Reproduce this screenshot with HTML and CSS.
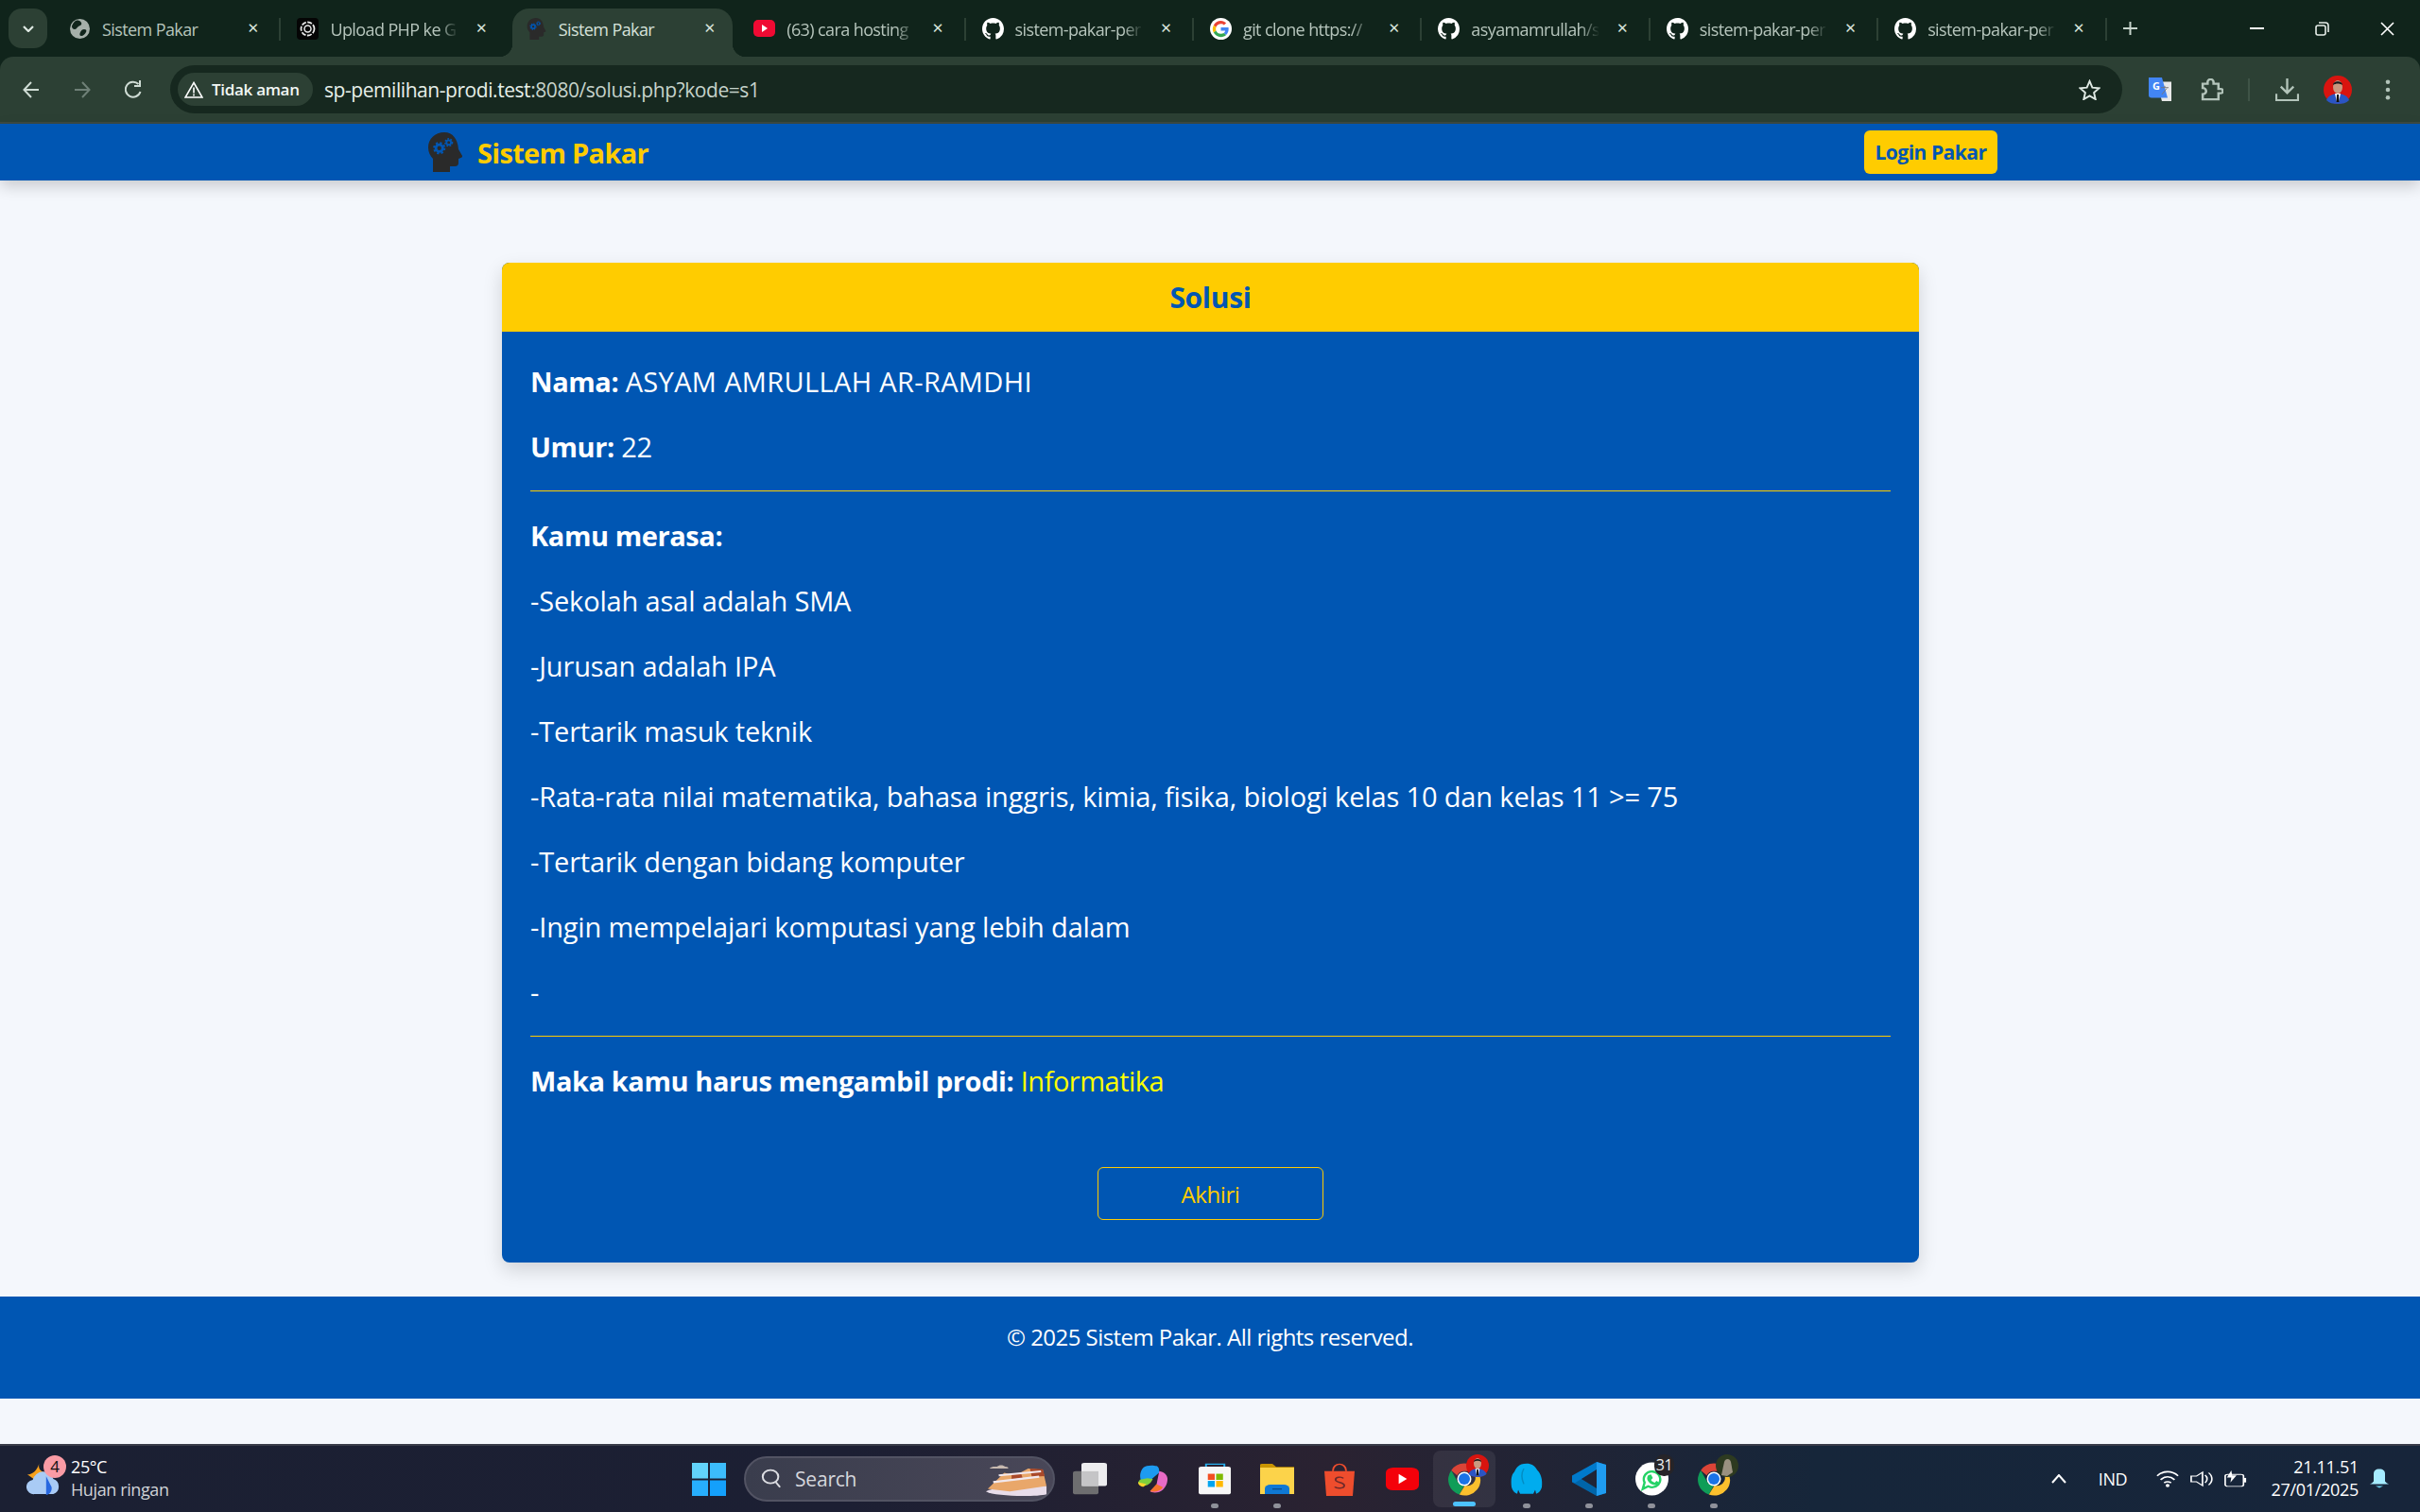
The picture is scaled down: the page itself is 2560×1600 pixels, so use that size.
FILE: index.html
```html
<!DOCTYPE html>
<html lang="id">
<head>
<meta charset="utf-8">
<title>Sistem Pakar</title>
<link rel="stylesheet" href="styles.css">
</head>
<body>
<svg class="defs" width="0" height="0" aria-hidden="true">
  <symbol id="gh" viewBox="0 0 16 16"><path fill="currentColor" d="M8 0C3.58 0 0 3.58 0 8c0 3.54 2.29 6.53 5.47 7.59.4.07.55-.17.55-.38 0-.19-.01-.82-.01-1.49-2.01.37-2.53-.49-2.69-.94-.09-.23-.48-.94-.82-1.13-.28-.15-.68-.52-.01-.53.63-.01 1.08.58 1.23.82.72 1.21 1.87.87 2.33.66.07-.52.28-.87.51-1.07-1.78-.2-3.64-.89-3.64-3.95 0-.87.31-1.59.82-2.15-.08-.2-.36-1.02.08-2.12 0 0 .67-.21 2.2.82.64-.18 1.32-.27 2-.27.68 0 1.36.09 2 .27 1.53-1.04 2.2-.82 2.2-.82.44 1.1.16 1.92.08 2.12.51.56.82 1.27.82 2.15 0 3.07-1.87 3.75-3.65 3.95.29.25.54.73.54 1.48 0 1.07-.01 1.93-.01 2.2 0 .21.15.46.55.38A8.013 8.013 0 0016 8c0-4.42-3.58-8-8-8z"/></symbol>
  <symbol id="head" viewBox="0 0 36 42">
    <path fill="#2a2a2a" d="M17 0C7 0 0 7 0 16c0 5 2 9 5 12v14h18v-6h5c3 0 4-1.500 4-4v-4l2.500-1c1.500-.5 2-1.500 1-3L32 18C31 7 26 0 17 0z"/>
    <circle cx="11.700" cy="16.700" r="3.600" fill="none" stroke="#0056b3" stroke-width="2.800"/>
    <circle cx="11.700" cy="16.700" r="5.500" fill="none" stroke="#0056b3" stroke-width="2.200" stroke-dasharray="2.300 2"/>
    <circle cx="21.700" cy="10.700" r="2.400" fill="none" stroke="#0056b3" stroke-width="1.800"/>
    <circle cx="21.700" cy="10.700" r="3.800" fill="none" stroke="#0056b3" stroke-width="1.600" stroke-dasharray="1.800 1.400"/>
  </symbol>
  <symbol id="chrome" viewBox="0 0 48 48">
    <path fill="#db4437" d="M24 2a22 22 0 0 1 19 11H24a11 11 0 0 0-10 6L5.600 12A22 22 0 0 1 24 2z"/>
    <path fill="#0f9d58" d="M5.600 12 14 27a11 11 0 0 0 10 6l-7 13A22 22 0 0 1 5.600 12z"/>
    <path fill="#fbc02d" d="M43 13a22 22 0 0 1-26 33l8-13a11 11 0 0 0 9-20z"/>
    <circle cx="24" cy="24" r="10" fill="#fff"/><circle cx="24" cy="24" r="8" fill="#1a73e8"/>
  </symbol>
  <symbol id="avatar" viewBox="0 0 30 30">
    <circle cx="15" cy="15" r="15" fill="#d9140f"/>
    <path fill="#2b55c4" d="M3 26c2-5 7-7 12-7s10 2 12 7c-3 3-7 4-12 4s-9-1-12-4z"/>
    <path fill="#fff" d="M12 19h6l-2 9h-2z"/><path fill="#111" d="M14 20h2l.500 8h-3z"/>
    <ellipse cx="15" cy="12" rx="5" ry="7" fill="#c99a80"/><path fill="#1a1a1a" d="M10 10c0-5 10-5 10 0-3-2-7-2-10 0z"/>
  </symbol>
</svg>

<header class="browser">
  <div class="tabstrip">
    <div class="tablist-btn"><svg width="12" height="7" viewBox="0 0 12 7"><path d="M1 1l5 5 5-5" fill="none" stroke="#dfe9e3" stroke-width="2.200"/></svg></div>
    <div class="tab">
      <svg class="fav" viewBox="0 0 23 23"><circle cx="11.500" cy="11.500" r="10.500" fill="#a6b0aa"/><path fill="#10241b" d="M7 3c3-1 5 0 6 2s-1 3-3 4-2 3-4 3-3-2-3-3 2-5 4-6zm9 9c2 0 3 1 2 3s-3 4-5 4-2-2-1-4 2-3 4-3z"/></svg>
      <span class="tab-text">Sistem Pakar</span><span class="tab-x">✕</span>
    </div>
    <i class="sep"></i>
    <div class="tab">
      <svg class="fav" viewBox="0 0 23 23"><rect width="23" height="23" rx="4" fill="#050505"/><circle cx="11.500" cy="11.500" r="7" fill="none" stroke="#e8e8e8" stroke-width="1.800" stroke-dasharray="5 1.500"/><circle cx="11.500" cy="11.500" r="3.500" fill="none" stroke="#e8e8e8" stroke-width="1.500"/></svg>
      <span class="tab-text tab-fade">Upload PHP ke G</span><span class="tab-x">✕</span>
    </div>
    <i class="sep sep-hidden"></i>
    <div class="tab tab-active">
      <svg class="fav"><use href="#head"/></svg>
      <span class="tab-text">Sistem Pakar</span><span class="tab-x">✕</span>
    </div>
    <i class="sep sep-hidden"></i>
    <div class="tab">
      <svg class="fav" viewBox="0 0 23 23"><rect y="2" width="23" height="18" rx="5" fill="#f00a33"/><path fill="#fff" d="M9 7l6 4-6 4z"/></svg>
      <span class="tab-text tab-fade">(63) cara hosting</span><span class="tab-x">✕</span>
    </div>
    <i class="sep"></i>
    <div class="tab">
      <svg class="fav fav-gh"><use href="#gh"/></svg>
      <span class="tab-text tab-fade">sistem-pakar-per</span><span class="tab-x">✕</span>
    </div>
    <i class="sep"></i>
    <div class="tab">
      <svg class="fav" viewBox="0 0 48 48"><circle cx="24" cy="24" r="24" fill="#fff"/><path fill="#ea4335" d="M24 13c3 0 5.300 1 7 2.700l4.800-4.800C32.700 8 28.700 6 24 6 17 6 11 10 8 16l5.500 4.300C15 16 19 13 24 13z"/><path fill="#4285f4" d="M41 24.500c0-1.200-.100-2.300-.3-3.500H24v7h9.700c-.4 2.200-1.700 4-3.600 5.300l5.500 4.300C39 34.400 41 30 41 24.500z"/><path fill="#fbbc05" d="M13.500 28.300a11 11 0 0 1 0-8L8 16a18 18 0 0 0 0 16.500z"/><path fill="#34a853" d="M24 42c4.800 0 9-1.600 11.600-4.400l-5.500-4.300c-1.500 1-3.500 1.700-6.100 1.700-5 0-9-3-10.500-7L8 32.500C11 38 17 42 24 42z"/></svg>
      <span class="tab-text tab-fade">git clone https://</span><span class="tab-x">✕</span>
    </div>
    <i class="sep"></i>
    <div class="tab">
      <svg class="fav fav-gh"><use href="#gh"/></svg>
      <span class="tab-text tab-fade">asyamamrullah/s</span><span class="tab-x">✕</span>
    </div>
    <i class="sep"></i>
    <div class="tab">
      <svg class="fav fav-gh"><use href="#gh"/></svg>
      <span class="tab-text tab-fade">sistem-pakar-per</span><span class="tab-x">✕</span>
    </div>
    <i class="sep"></i>
    <div class="tab">
      <svg class="fav fav-gh"><use href="#gh"/></svg>
      <span class="tab-text tab-fade">sistem-pakar-per</span><span class="tab-x">✕</span>
    </div>
    <i class="sep"></i>
    <div class="newtab"><svg width="15" height="14" viewBox="0 0 15 14"><path d="M7.500 0v14M0 7h15" stroke="#c6d3cb" stroke-width="2"/></svg></div>
    <div class="winctl">
      <svg width="15" height="2" viewBox="0 0 15 2"><rect width="15" height="2" fill="#fff"/></svg>
      <svg width="15" height="15" viewBox="0 0 15 15"><rect x="1" y="4" width="10" height="10" rx="2" fill="none" stroke="#e6ede9" stroke-width="1.600"/><path d="M4 1h7a3 3 0 0 1 3 3v7" fill="none" stroke="#e6ede9" stroke-width="1.600"/></svg>
      <svg width="15" height="15" viewBox="0 0 15 15"><path d="M1 1l13 13M14 1L1 14" stroke="#fff" stroke-width="1.600"/></svg>
    </div>
  </div>
  <div class="toolbar">
    <div class="navbtn"><svg width="18" height="18" viewBox="0 0 18 18"><path d="M17 9H2M9 1L1.500 9 9 17" fill="none" stroke="#cfdcd4" stroke-width="2"/></svg></div>
    <div class="navbtn"><svg width="18" height="18" viewBox="0 0 18 18"><path d="M1 9h15M9 1l7.500 8L9 17" fill="none" stroke="#6f8077" stroke-width="2"/></svg></div>
    <div class="navbtn"><svg width="19" height="19" viewBox="0 0 19 19"><path d="M16.500 12A8 8 0 1 1 14.500 4" fill="none" stroke="#cfdcd4" stroke-width="2"/><path d="M16 0v6h-6" fill="none" stroke="#cfdcd4" stroke-width="2"/></svg></div>
    <div class="omnibox">
      <div class="chip">
        <svg width="20" height="18" viewBox="0 0 20 18"><path d="M10 1.500L19 17H1z" fill="none" stroke="#fff" stroke-width="1.600"/><path d="M10 6.500v6M10 13.500v2" stroke="#fff" stroke-width="1.600"/></svg>
        <span>Tidak aman</span>
      </div>
      <span class="url">sp-pemilihan-prodi.test<span class="url-dim">:8080/solusi.php?kode=s1</span></span>
      <svg class="star" width="23" height="22" viewBox="0 0 24 23"><path d="M12 2l3 7 7.500.700-5.700 5 1.700 7.300L12 18.200 5.500 22l1.700-7.300-5.700-5L9 9z" fill="none" stroke="#dfe9e3" stroke-width="2"/></svg>
    </div>
    <div class="tools">
      <div class="tool tool-a"><svg width="24" height="25" viewBox="0 0 24 28" preserveAspectRatio="none"><path fill="#e8e8e8" d="M8 5h16v23H14z"/><path fill="#4285f4" d="M0 0h14l6 24H3a3 3 0 0 1-3-3z"/><text x="4" y="15" class="g-letter">G</text><path d="M13 12h8M17 10v2M14 20l5-7" stroke="#777" fill="none"/></svg></div>
      <div class="tool tool-b"><svg width="25" height="24" viewBox="0 0 24 26" preserveAspectRatio="none"><path d="M3 6h5V4a3 3 0 0 1 6 0v2h5v6h2a2 2 0 0 1 0 5h-2v7H3v-6a3 3 0 0 0 0-7z" fill="none" stroke="#b3c4ba" stroke-width="2.400"/></svg></div>
      <i class="tool-sep"></i>
      <div class="tool tool-c"><svg width="25" height="25" viewBox="0 0 26 26"><path d="M13 1v15M6 10l7 7 7-7M1 18v7h24v-7" fill="none" stroke="#b3c4ba" stroke-width="2.400"/></svg></div>
      <div class="tool tool-d"><svg width="30" height="30"><use href="#avatar"/></svg></div>
      <div class="tool tool-e"><svg width="6" height="22" viewBox="0 0 6 24"><circle cx="3" cy="3" r="2.500" fill="#b3c4ba"/><circle cx="3" cy="12" r="2.500" fill="#b3c4ba"/><circle cx="3" cy="21" r="2.500" fill="#b3c4ba"/></svg></div>
    </div>
  </div>
</header>

<div class="page">
  <nav class="topnav">
    <div class="brand">
      <svg class="brand-logo"><use href="#head"/></svg>
      <span class="brand-name">Sistem Pakar</span>
    </div>
    <a class="login">Login Pakar</a>
  </nav>
  <main class="card">
    <h1 class="card-title">Solusi</h1>
    <section class="card-body">
      <p><b>Nama:</b> <span class="caps">ASYAM AMRULLAH AR-RAMDHI</span></p>
      <p><b>Umur:</b> 22</p>
      <hr>
      <p><b>Kamu merasa:</b></p>
      <p>-Sekolah asal adalah SMA</p>
      <p>-Jurusan adalah IPA</p>
      <p>-Tertarik masuk teknik</p>
      <p>-Rata-rata nilai matematika, bahasa inggris, kimia, fisika, biologi kelas 10 dan kelas 11 &gt;= 75</p>
      <p>-Tertarik dengan bidang komputer</p>
      <p>-Ingin mempelajari komputasi yang lebih dalam</p>
      <p>-</p>
      <hr>
      <p><b>Maka kamu harus mengambil prodi:</b> <span class="prodi">Informatika</span></p>
      <a class="end-btn">Akhiri</a>
    </section>
  </main>
  <footer class="foot">© 2025 Sistem Pakar. All rights reserved.</footer>
</div>

<div class="taskbar">
  <div class="weather">
    <div class="weather-ic">
      <svg width="36" height="36" viewBox="0 0 38 38"><path fill="#f6a11d" d="M14 2c-1 6 2 9 8 10L12 22 1 14c6 0 11-5 13-12z"/><path fill="#a9cbf5" d="M9 36a8 8 0 0 1-2-16 12 12 0 0 1 23-1 9 9 0 0 1 0 17z"/><path fill="#2767e0" d="M22 16l6 12c1 5-3 9-6 9z"/></svg>
      <span class="wbadge">4</span>
    </div>
    <div class="wtext"><span class="wtemp">25°C</span><span class="wdesc">Hujan ringan</span></div>
  </div>
  <div class="slot slot-win"><svg width="36" height="35" viewBox="0 0 36 36" preserveAspectRatio="none"><path fill="#62d3fb" d="M0 0h17v17H0z"/><path fill="#3cbcfb" d="M19 0h17v17H19z"/><path fill="#27aefc" d="M0 19h17v17H0z"/><path fill="#14a0fb" d="M19 19h17v17H19z"/></svg></div>
  <div class="search">
    <svg width="22" height="22" viewBox="0 0 24 28" preserveAspectRatio="none"><circle cx="11" cy="11" r="9" fill="none" stroke="#dcdde2" stroke-width="2.200"/><path d="M17 18l5 7" stroke="#dcdde2" stroke-width="2.200"/></svg>
    <span>Search</span>
    <svg class="search-art" width="68" height="37" viewBox="0 0 70 52" preserveAspectRatio="none"><path fill="#c7b9b0" d="M6 10c2-4 6-3 8-3 2-3 7-3 9 0 3 0 4 2 3 3z"/><path fill="#e8ddea" d="M2 44c10-8 50-12 66-8v12c-10 4-56 4-66-4z"/><path fill="#e9a76a" d="M4 40L22 16l12 4 14-10 16 2 4 24-40 8z"/><path fill="#a9492a" d="M30 18l10-2 2 8-12 2zM50 10l14 1 2 10-14 1z"/><path d="M10 30l50-8M16 20l46-6" stroke="#f1e8ee" stroke-width="3"/></svg>
  </div>
  <div class="slot"><svg width="36" height="34" viewBox="0 0 36 50" preserveAspectRatio="none"><rect y="13" width="27" height="36" rx="3" fill="#6e6e70"/><rect x="9" width="27" height="36" rx="3" fill="#fff" opacity=".92"/><rect x="9" y="13" width="18" height="23" fill="#c5c5c7"/></svg></div>
  <div class="slot"><svg width="33" height="30" viewBox="0 0 34 44" preserveAspectRatio="none"><path fill="#1d9bf0" d="M7 4c2-3 10-4 14-2 3 2 3 6 3 10l-8 10-11 4C2 20 3 9 7 4z"/><path fill="#e86bc5" d="M24 10c5 1 9 6 9 12 0 8-3 17-9 20-4 2-9 1-10-1l7-10z"/><path fill="#f3742b" d="M14 41c5 2 11 1 14-6l-7-5z"/><path fill="#7fcf3c" d="M1 27c1 5 5 7 9 5 3-1 6-6 7-10l-6-1-8 2z"/><path fill="#fbd22b" d="M1 27l9 3-3 4c-3 0-6-3-6-7z"/></svg></div>
  <div class="slot"><svg width="35" height="34" viewBox="0 0 36 50" preserveAspectRatio="none"><path d="M8 8V2h20v6" fill="none" stroke="#27b0ee" stroke-width="2"/><rect y="6" width="35" height="43" rx="3" fill="#f7f7f7"/><path fill="#f25022" d="M10 17h7.500v9.500H10z"/><path fill="#7fba00" d="M19 17h7.500v9.500H19z"/><path fill="#00a4ef" d="M10 28h7.500v9.500H10z"/><path fill="#ffb900" d="M19 28h7.500v9.500H19z"/></svg><i class="dot"></i></div>
  <div class="slot"><svg width="36" height="32" viewBox="0 0 36 48" preserveAspectRatio="none"><path fill="#c99400" d="M0 2a2 2 0 0 1 2-2h11l4 5h19v8H0z"/><path fill="#fcd34a" d="M0 6h36v42H0z"/><path fill="#0f78d4" d="M5 48v-9a6 6 0 0 1 6-6h14a6 6 0 0 1 6 6v9z"/><path d="M13 40h10" stroke="#0a4d8c" stroke-width="2"/></svg><i class="dot"></i></div>
  <div class="slot"><svg width="32" height="36" viewBox="0 0 32 52" preserveAspectRatio="none"><path d="M9 14c0-14 14-14 14 0" fill="none" stroke="#ee4d2d" stroke-width="2"/><path fill="#ee4d2d" d="M0 14h32l-2 38H2z"/><path d="M20 25c-2-3-9-2-8 3 1 4 9 3 9 8s-8 5-10 2" fill="none" stroke="#6e2a2a" stroke-width="2"/></svg></div>
  <div class="slot"><svg width="35" height="24" viewBox="0 0 36 36" preserveAspectRatio="none"><rect width="36" height="36" rx="8" fill="#f4010a"/><path fill="#fff" d="M14 10l9 8-9 8z"/></svg></div>
  <div class="slot slot-active">
    <svg width="36" height="36"><use href="#chrome"/></svg>
    <svg class="ov-avatar" width="24" height="24"><use href="#avatar"/></svg>
    <i class="dot dot-active"></i>
  </div>
  <div class="slot"><svg width="34" height="34" viewBox="0 0 34 50" preserveAspectRatio="none"><path fill="#00acee" d="M17 1C8 1 6 8 4 14 1 18 0 26 1 38c1 5 3 9 6 10l1-6 2 6h14l2-6 1 6c3-1 5-5 6-10 1-12-1-22-5-27C26 5 22 1 17 1z"/><path d="M14 9c-2 5-3 14 0 24" fill="none" stroke="#028dc4" stroke-width="1.500"/></svg><i class="dot"></i></div>
  <div class="slot"><svg width="36" height="36" viewBox="0 0 36 50" preserveAspectRatio="none"><path fill="#0065a9" d="M26 0l10 4v42l-10 4L0 30v-9l3-2 23 20z"/><path fill="#1f9cf0" d="M26 0l10 4v42l-10 4z"/><path fill="#007acc" d="M26 0L0 20v9l3 2L26 11z"/></svg><i class="dot"></i></div>
  <div class="slot">
    <svg width="35" height="36" viewBox="0 0 36 36"><circle cx="18" cy="18" r="18" fill="#fff"/><path fill="none" stroke="#25d366" stroke-width="2.500" d="M8 29l2-7c-3-6 2-13 9-12 8 1 10 9 6 14-3 3-7 4-11 2z"/><path fill="#25d366" d="M14 14l3-1 2 4-2 2c1 2 2 2 4 3l2-2 3 2c-1 3-5 3-8 2-4-2-7-6-4-10z"/></svg>
    <span class="ov-count">31</span><i class="dot"></i>
  </div>
  <div class="slot">
    <svg width="36" height="36"><use href="#chrome"/></svg>
    <svg class="ov-avatar" width="24" height="24" viewBox="0 0 24 24"><circle cx="12" cy="12" r="12" fill="#2d3a20"/><path fill="#9a9180" d="M6 22l3-14c1-4 6-4 7 0l2 11-6 4z"/></svg>
    <i class="dot"></i>
  </div>
  <div class="tray">
    <div class="tr tr-chev"><svg width="16" height="10" viewBox="0 0 16 10"><path d="M1 9l7-8 7 8" fill="none" stroke="#fff" stroke-width="2"/></svg></div>
    <div class="tr tr-lang">IND</div>
    <div class="tr tr-ic"><svg width="24" height="18" viewBox="0 0 26 22" preserveAspectRatio="none"><path d="M1 7c7-7 17-7 24 0M5 12c5-5 11-5 16 0M9 16c3-2 5-2 8 0" fill="none" stroke="#fff" stroke-width="2"/><circle cx="13" cy="19.500" r="2.200" fill="#fff"/></svg></div>
    <div class="tr tr-ic"><svg width="24" height="20" viewBox="0 0 26 34" preserveAspectRatio="none"><path d="M1 12h6l7-7v24l-7-7H1z" fill="none" stroke="#fff" stroke-width="1.800"/><path d="M17 10c3 4 3 10 0 14M21 6c5 6 5 16 0 22" fill="none" stroke="#fff" stroke-width="1.800"/></svg></div>
    <div class="tr tr-ic"><svg width="24" height="20" viewBox="0 0 26 38" preserveAspectRatio="none"><rect x="1" y="10" width="21" height="24" rx="3" fill="none" stroke="#fff" stroke-width="1.800"/><rect x="22" y="17" width="3" height="9" fill="#fff"/><path d="M8 2L3 16h5l-1 10 7-14H9z" fill="#fff"/></svg></div>
    <div class="clock"><span>21.11.51</span><span>27/01/2025</span></div>
    <div class="tr tr-bell"><svg width="20" height="23" viewBox="0 0 20 46" preserveAspectRatio="none"><path fill="#a6ecff" d="M10 1c4 0 6 4 6 10v16c1 3 3 5 4 6H0c1-1 3-3 4-6V11C4 5 6 1 10 1z"/><path fill="#6fd3f2" d="M6 37h8l-4 4z"/></svg></div>
  </div>
</div>
</body>
</html>
```
FILE: styles.css
```css
* { box-sizing: border-box; }
html, body { margin: 0; padding: 0; }
body {
  width: 2560px;
  height: 1600px;
  overflow: hidden;
  display: flex;
  flex-direction: column;
  background: #f4f7fc;
  font-family: "Open Sans", "Noto Sans", sans-serif;
}
.defs { position: absolute; }

/* browser chrome */
.browser { background: #10241b; flex: none; }
.tabstrip { height: 60px; display: flex; align-items: flex-start; padding: 9px 0 0 9px; }
.tablist-btn {
  width: 41px; height: 42px; margin-right: 6px; border-radius: 14px; flex: none;
  background: #2c4034; display: flex; align-items: center; justify-content: center;
}
.tab {
  width: 239.4px; height: 51px; flex: none;
  display: flex; align-items: center;
  padding: 0 21px 8px 17px;
}
.tab-active {
  width: 233.4px; margin: 0 3px; padding-left: 14px; padding-right: 18px;
  background: #2c4034; border-radius: 18px 18px 0 0;
  position: relative;
}
.tab-active::before, .tab-active::after {
  content: ""; position: absolute; bottom: 0; width: 14px; height: 14px;
}
.tab-active::before { left: -14px; background: radial-gradient(circle at 0 0, transparent 14px, #2c4034 14.500px); }
.tab-active::after { right: -14px; background: radial-gradient(circle at 100% 0, transparent 14px, #2c4034 14.500px); }
.fav { width: 23px; height: 23px; flex: none; margin-right: 12px; }
.fav-gh { color: #fff; }
.tab-text {
  flex: 1; min-width: 0; white-space: nowrap;
  font-size: 18px; color: #b6c5bc; letter-spacing: -.6px;
}
.tab-fade {
  -webkit-mask-image: linear-gradient(90deg, #000 85%, transparent);
  mask-image: linear-gradient(90deg, #000 85%, transparent);
}
.tab-active .tab-text { color: #d6e2da; }
.tab-x { width: 13px; flex: none; margin-left: 18px; font-size: 15px; line-height: 15px; color: #d6e2da; text-align: center; font-family: "DejaVu Sans", sans-serif; }
.sep { width: 2px; height: 24px; margin-top: 10px; background: #2c4034; flex: none; }
.sep-hidden { background: transparent; }
.newtab { width: 50px; height: 42px; flex: none; display: flex; align-items: center; justify-content: center; }
.winctl { margin-left: auto; width: 207px; height: 42px; display: flex; align-items: center; justify-content: space-around; }
.toolbar {
  height: 71px; display: flex; align-items: center;
  background: #2c4034; border-bottom: 2px solid #3d4a42;
  border-radius: 14px 14px 0 0;
  padding-left: 6px;
}
.navbtn { width: 54px; height: 54px; flex: none; display: flex; align-items: center; justify-content: center; }
.omnibox {
  width: 2065px; height: 51px; margin-left: 12px; flex: none;
  background: #16281f; border-radius: 26px;
  display: flex; align-items: center; padding: 0 24px 0 8px;
}
.chip {
  width: 143px; height: 35px; border-radius: 18px; background: #2c4034;
  display: flex; align-items: center; gap: 9px; padding-left: 7px;
  font-size: 17px; font-weight: 600; color: #f2f7f4; letter-spacing: -.3px; white-space: nowrap;
}
.url { margin-left: 12px; font-size: 21px; color: #e6efe9; letter-spacing: -.44px; white-space: nowrap; }
.url-dim { color: #c6d3cb; }
.star { margin-left: auto; margin-right: -1px; }
.tools { flex: 1; display: flex; align-items: center; }
.tool { display: flex; align-items: center; justify-content: center; height: 54px; }
.tool-a { width: 54px; margin-left: 13px; }
.tool-b { width: 54px; }
.tool-sep { width: 2px; height: 24px; background: #3f5447; margin: 0 12px; }
.tool-c { width: 54px; }
.tool-d { width: 54px; }
.tool-e { width: 52px; }
.g-letter { font: 700 11px "Open Sans", sans-serif; fill: #fff; }

/* page */
.page { flex: 1; display: flex; flex-direction: column; min-height: 0; }
.topnav {
  height: 60px; flex: none; background: #0056b3;
  box-shadow: 0 6px 15px rgba(0,0,0,.18);
  display: flex; align-items: center; padding: 0 447px 0 453px;
  justify-content: space-between;
  position: relative;
}
.brand { display: flex; align-items: center; gap: 16px; }
.brand-logo { width: 36px; height: 42px; flex: none; }
.brand-name { font-size: 29px; font-weight: 700; color: #ffcc00; letter-spacing: -.7px; white-space: nowrap; }
.login {
  width: 141px; height: 46px; border-radius: 6px; background: #ffcc00; color: #0056b3;
  font-size: 21px; font-weight: 700; letter-spacing: -.5px;
  display: flex; align-items: center; justify-content: center; white-space: nowrap;
}
.card {
  width: 1499px; margin: 87px 0 36px 531px; flex: none;
  background: #0056b3; border-radius: 8px;
  box-shadow: 0 8px 20px rgba(0,0,0,.15);
}
.card-title {
  margin: 0; height: 73px; background: #ffcc00; color: #0056b3;
  border-radius: 8px 8px 0 0;
  font-size: 30px; font-weight: 700; line-height: 73px; text-align: center; letter-spacing: -.3px;
}
.card-body {
  padding: 30px 30px 45px 30px; color: #fff;
  font-size: 29px; letter-spacing: -.15px;
  display: flex; flex-direction: column; gap: 24px;
}
.card-body p { margin: 0; line-height: 45px; white-space: nowrap; }
.card-body b { letter-spacing: -.42px; }
.card-body hr { width: 100%; height: 1px; margin: 0; border: 0; background: #ffcc00; }
.caps { letter-spacing: .35px; }
.prodi { color: #ffff00; letter-spacing: -.5px; }
.end-btn {
  width: 239px; height: 56px; margin: 45px auto 0;
  border: 1px solid #ffcc00; border-radius: 6px;
  color: #ffcc00; font-size: 24px; letter-spacing: -.4px;
  display: flex; align-items: center; justify-content: center;
}
.foot {
  height: 108px; flex: none; background: #0056b3; color: #fff;
  padding-top: 23px; font-size: 24px; line-height: 40px; text-align: center; letter-spacing: -.55px;
}

/* taskbar */
.taskbar {
  height: 72px; flex: none; display: flex; align-items: center;
  border-top: 2px solid #393c49;
  background: linear-gradient(90deg, #1b2033 0%, #1c1f33 35%, #2a2231 55%, #16263a 75%, #17253a 100%);
  color: #fff;
}
.weather { width: 717px; flex: none; display: flex; align-items: center; padding-left: 28px; }
.weather-ic { width: 47px; height: 36px; flex: none; position: relative; }
.wbadge {
  position: absolute; left: 18px; top: -7px; width: 24px; height: 24px; border-radius: 50%;
  background: #fa9ba5; color: #111; font-size: 17px; line-height: 24px; text-align: center;
}
.wtext { display: flex; flex-direction: column; margin-top: -3px; font-size: 18px; line-height: 24px; letter-spacing: -.4px; }
.wtemp { color: #fff; }
.wdesc { color: #cfd2d6; }
.slot {
  width: 66px; height: 60px; flex: none; position: relative;
  display: flex; align-items: center; justify-content: center;
}
.slot-win { margin-right: 4px; }
.slot-active { background: rgba(255,255,255,.07); border-radius: 8px; }
.search {
  width: 329px; height: 48px; margin-right: 4px; flex: none; border-radius: 24px;
  background: linear-gradient(90deg, #3a3d4d, #494758);
  border: 2px solid #525363;
  display: flex; align-items: center; padding-left: 16px; gap: 14px;
  font-size: 21px; color: #d5d6dc; letter-spacing: -.2px;
}
.search-art { margin-left: auto; margin-right: 5px; }
.dot { position: absolute; bottom: -1px; left: 29px; width: 8px; height: 5px; border-radius: 3px; background: #8f919a; }
.dot-active { left: 21px; width: 24px; background: #4dc2ff; bottom: 1px; }
.ov-avatar { position: absolute; left: 35px; top: 4px; }
.ov-count {
  position: absolute; left: 36px; top: 4px; width: 21px; height: 23px; border-radius: 10px;
  background: #262428; color: #f0f0f0; font-size: 16px; line-height: 23px; text-align: center; letter-spacing: -.5px;
}
.tray { margin-left: auto; display: flex; align-items: center; padding-right: 21px; }
.tr { display: flex; align-items: center; justify-content: center; height: 40px; }
.tr-chev { width: 44px; }
.tr-lang { width: 70px; margin-right: 5px; font-size: 18px; letter-spacing: -.4px; }
.tr-ic { width: 36px; }
.clock { width: 112px; display: flex; flex-direction: column; align-items: flex-end; margin-top: -2px; font-size: 18px; line-height: 24px; letter-spacing: -.3px; white-space: nowrap; }
.tr-bell { width: 44px; }
```
